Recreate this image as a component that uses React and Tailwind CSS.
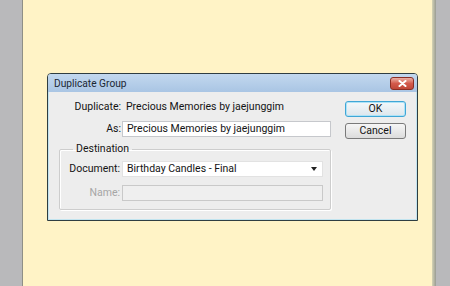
export default function App() {
  return (
    <div className="flex h-[286px] w-[450px] overflow-hidden bg-[#b9b9bb] font-['Roboto','Liberation_Sans',Arial,sans-serif] text-[10.5px] leading-[12px] text-[#141414]">
      <div className="w-[22px] shrink-0" />
      <div className="w-px shrink-0 bg-[#8f8f86]" />
      <div className="w-[409px] shrink-0 bg-[#fff3c6] pl-[24px] pt-[73px]">
        <div className="flex h-[148px] w-[371px] flex-col rounded-t-[4px] border border-[#2f3d41] bg-[#ededed]">
          {/* title bar */}
          <div className="flex h-[18px] items-start justify-between rounded-t-[3px] bg-gradient-to-b from-[#c3d8ee] to-[#a9c5e4] pl-[6px] pr-[3px]">
            <span className="mt-[4px] text-[10.2px] leading-[12px] text-[#1b2733]">Duplicate Group</span>
            <div className="mt-[3px] flex h-[13px] w-[24px] items-center justify-center rounded-[3px] border border-[#8a2e24] bg-gradient-to-b from-[#eab0a6] via-[#d35a4c] to-[#c04637]">
              <svg width="9" height="7" viewBox="0 0 9 7">
                <path d="M1.5 1 L7.5 6 M7.5 1 L1.5 6" stroke="#fff" strokeWidth="2" strokeLinecap="round" />
              </svg>
            </div>
          </div>

          {/* body */}
          <div className="flex flex-1 border-x border-b border-[#c2e4ef] pl-[10px]">
            <div className="w-[272px]">
              <div className="mt-[7px] flex h-[16px] items-center">
                <span className="w-[62px] text-right">Duplicate:</span>
                <span className="ml-[5px]">Precious Memories by jaejunggim</span>
              </div>
              <div className="mt-[6px] flex h-[16px] items-center">
                <span className="w-[62px] text-right">As:</span>
                <div className="ml-px flex h-[16px] w-[209px] items-center border border-[#c6c8cc] bg-white pl-[4px]">
                  Precious Memories by jaejunggim
                </div>
              </div>
              <fieldset className="mt-[6px] h-[67px] rounded-[2px] border border-[#cdcdcd] px-0 pb-[6px] shadow-[inset_1px_1px_0_#fff,1px_1px_0_#fff]">
                <legend className="ml-[13px] px-[3px] leading-[12px]">Destination</legend>
                <div className="mt-[6px] flex h-[16px] items-center">
                  <span className="w-[60px] text-right">Document:</span>
                  <div className="ml-[2px] flex h-[16px] w-[201px] items-center justify-between border border-[#e2e2e2] bg-white pl-[4px] pr-[5px]">
                    <span>Birthday Candles - Final</span>
                    <svg width="6" height="4" viewBox="0 0 6 4">
                      <path d="M0 0 H6 L3 4 Z" fill="#222" />
                    </svg>
                  </div>
                </div>
                <div className="mt-[8px] flex h-[16px] items-center">
                  <span className="w-[60px] text-right text-[#a6a6a6]">Name:</span>
                  <div className="ml-[2px] h-[16px] w-[201px] border border-[#c9c9c9] bg-[#efefef]" />
                </div>
              </fieldset>
            </div>

            <div className="ml-[14px] flex w-[61px] flex-col">
              <button className="mt-[9px] h-[16px] rounded-[3px] border border-[#3fa6d6] bg-gradient-to-b from-[#f4f8fa] to-[#dde6ec] text-[10.5px] leading-[12px] text-[#141414] shadow-[inset_0_0_0_1px_#aee3f7]">
                OK
              </button>
              <button className="mt-[6px] h-[16px] rounded-[3px] border border-[#7a7a7a] bg-gradient-to-b from-[#f6f6f6] to-[#dcdcdc] text-[10.5px] leading-[12px] text-[#141414]">
                Cancel
              </button>
            </div>
          </div>
        </div>
      </div>
      <div className="w-[4px] shrink-0 bg-gradient-to-r from-[#d6d4b4] to-[#9a9c94]" />
      <div className="flex-1" />
    </div>
  );
}
